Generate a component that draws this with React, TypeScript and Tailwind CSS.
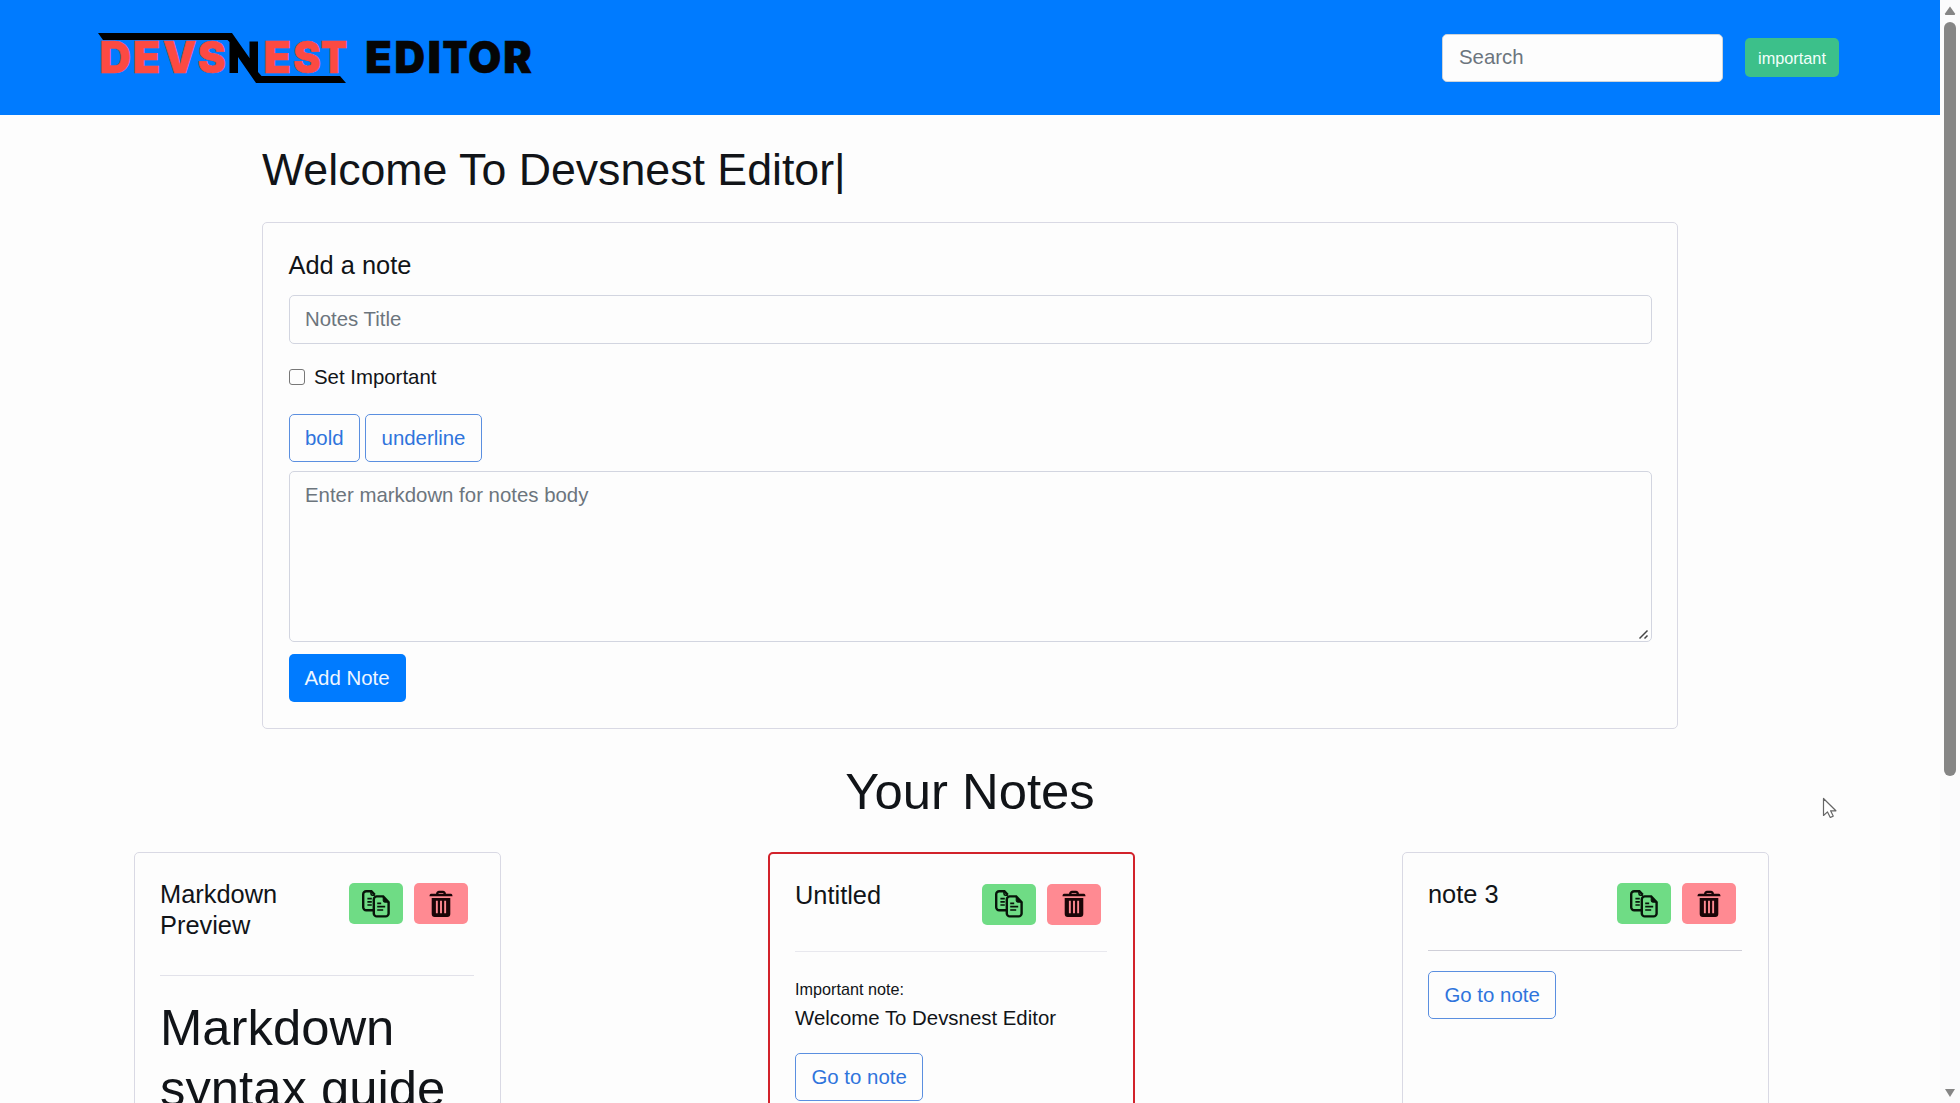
import React from "react";

const RED = "#fc4a42";
const BLACK = "#050505";

/* letter, left edge, advance width, colour */
const LETTERS: [string, number, number, string][] = [
  ["D", 99.6, 31.5, RED],
  ["E", 132.7, 27.5, RED],
  ["V", 163, 33.5, RED],
  ["S", 197.8, 28, RED],
  ["E", 263.4, 27.5, RED],
  ["S", 293.2, 27.5, RED],
  ["T", 320.8, 26.5, RED],
  ["E", 365.2, 26.5, BLACK],
  ["D", 394.4, 30.5, BLACK],
  ["I", 427.6, 13.5, BLACK],
  ["T", 442.5, 25, BLACK],
  ["O", 468.2, 33, BLACK],
  ["R", 503.2, 28.5, BLACK],
];

function Logo() {
  return (
    <svg
      className="ml-[97px] block"
      width="440"
      height="60"
      viewBox="97 28 440 60"
      aria-label="Devsnest Editor"
    >
      <g fontFamily="Inter, sans-serif" fontWeight="900" fontSize="43.5">
        {LETTERS.map(([char, x, width, color]) => (
          <text
            key={x}
            x={x}
            y="73"
            textLength={width}
            lengthAdjust="spacingAndGlyphs"
            fill={color}
            stroke={color}
            strokeWidth="0.6"
          >
            {char}
          </text>
        ))}
      </g>
      <polygon
        fill="#000"
        points="98,33 232,33 249.5,58 249.5,41.5 258,41.5 258,72 261.5,76 340,76 346,83 256,83 238,57 238,73 229.5,73 229.5,42 227.5,40 103,40"
      />
    </svg>
  );
}

function CopyIcon() {
  return (
    <svg width="28" height="28" viewBox="0 0 28 28" fill="none" stroke="#08150a" strokeWidth="2.4">
      <path d="M11.2 20.2H4.2a3 3 0 0 1-3-3V4.2a3 3 0 0 1 3-3h5.2l3.4 3.6" />
      <path d="M9 1.2v2.6a1.5 1.5 0 0 0 1.5 1.5h2.4" strokeWidth="1.6" />
      <path d="M5.4 8.6h4.4M5.4 11.8h4.4M5.4 15h4.4" strokeWidth="1.7" />
      <path d="M14.8 6.4h6.4l5.4 5.8v11.2a3 3 0 0 1-3 3h-8.8a3 3 0 0 1-3-3V9.4a3 3 0 0 1 3-3z" />
      <path d="M21.2 6.4l5.4 5.8h-3.9a1.5 1.5 0 0 1-1.5-1.5z" fill="#08150a" strokeWidth="1" />
      <path d="M15.2 13.4h4M15.2 16.6h8M15.2 20h6" strokeWidth="1.7" />
    </svg>
  );
}

function TrashIcon() {
  return (
    <svg width="24" height="28" viewBox="0 0 24 28" fill="#1a0507">
      <path d="M7 4.6C7 2 8.4.8 10 .8h4c1.600 0 3 1.200 3 3.800h-2.300c0-1-.4-1.500-1.200-1.500h-3c-.8 0-1.200.5-1.200 1.500z" />
      <path d="M2 3.700h20c.9 0 1.500.9 1.500 2.600H.5c0-1.700.6-2.600 1.500-2.600z" />
      <path
        fillRule="evenodd"
        d="M2.700 8h18.600v16a3 3 0 0 1-3 3H5.700a3 3 0 0 1-3-3zM6.900 10.800v12.400h1.900V10.800zM11.050 10.800v12.400h1.900V10.800zM15.200 10.800v12.400h1.900V10.800z"
      />
    </svg>
  );
}

function OutlineButton({ children }: { children: React.ReactNode }) {
  return (
    <button className="h-[48px] rounded-[5px] border border-[#5b8fe0] px-[15.5px] text-[20.4px] leading-[30px] text-[#2f74dc]">
      {children}
    </button>
  );
}

function NoteCard({
  title,
  important,
  children,
}: {
  title: string;
  important?: boolean;
  children: React.ReactNode;
}) {
  return (
    <article
      className={
        important
          ? "h-[400px] w-[367px] rounded-[5px] border-2 border-[#d2222b] px-[25.5px] pt-[25.5px]"
          : "h-[400px] w-[367px] rounded-[5px] border border-[#d9d9e4] px-[25.5px] pt-[26px]"
      }
    >
      <div className="flex items-start">
        <h5 className={important ? "w-[187px] text-[25.4px] leading-[31px]" : "w-[189px] text-[25.4px] leading-[31px]"}>
          {title}
        </h5>
        <div className="mt-[4px] flex gap-[11px]">
          <button className="flex h-[41px] w-[54px] items-center justify-center rounded-[5px] bg-[#6fdc85]">
            <CopyIcon />
          </button>
          <button className="flex h-[41px] w-[54px] items-center justify-center rounded-[5px] bg-[#ff8a92]">
            <TrashIcon />
          </button>
        </div>
      </div>
      {children}
    </article>
  );
}

export default function App() {
  return (
    <div className="flex h-[1103px] w-[1960px] overflow-hidden bg-[#fdfdfd] font-['Liberation_Sans',Arial,sans-serif] text-[#111418]">
      <main className="relative h-full w-[1940px] overflow-hidden">
        <header className="flex h-[115px] items-center bg-[#007bff]">
          <Logo />
          <input
            placeholder="Search"
            className="ml-[905px] h-[48px] w-[281px] rounded-[5px] border border-[#ced4da] bg-[#fdfdfd] px-[16px] text-[20.4px] placeholder:text-[#6c757d]"
          />
          <button className="ml-[22px] h-[39px] w-[94px] rounded-[5px] bg-[#3cc08a] pt-[1px] text-[16.3px] text-[#f2fffa]">
            important
          </button>
        </header>

        <section className="mx-[262px]">
          <h1 className="flex h-[107px] pt-[27px] text-[44.7px] leading-[56px] whitespace-nowrap">
            Welcome To Devsnest Editor|
          </h1>
          <div className="h-[507px] rounded-[5px] border border-[#d9d9e4] px-[25.5px] pt-[27px]">
            <h5 className="text-[25.4px] leading-[30px]">Add a note</h5>
            <input
              placeholder="Notes Title"
              className="mt-[15px] block h-[49px] w-full rounded-[5px] border border-[#d2d5e0] px-[15.5px] text-[20.4px] placeholder:text-[#6c757d]"
            />
            <label className="mt-[18px] flex h-[30px] items-center gap-[9.5px] text-[20.4px]">
              <span className="size-[16px] rounded-[3px] border border-[#777]" />
              Set Important
            </label>
            <div className="mt-[22px] flex gap-[5px]">
              <OutlineButton>bold</OutlineButton>
              <OutlineButton>underline</OutlineButton>
            </div>
            <div className="relative mt-[8.5px] h-[171px]">
              <textarea
                placeholder="Enter markdown for notes body"
                className="block h-full w-full resize-none rounded-[5px] border border-[#d2d5e0] px-[15.5px] pt-[8px] text-[20.4px] leading-[30.3px] placeholder:text-[#6c757d]"
              />
              <svg className="absolute right-[2px] bottom-[2px]" width="12" height="12" stroke="#444" strokeWidth="1.5">
                <path d="M1.5 10.5L9.5 2.5M6.5 10.5L9.5 7.5" />
              </svg>
            </div>
            <button className="mt-[12.5px] h-[48px] w-[117px] rounded-[5px] bg-[#007bff] text-[20.4px] text-[#eef6ff]">
              Add Note
            </button>
          </div>
        </section>

        <h1 className="h-[123px] pt-[33px] text-center text-[50.8px] leading-[60.6px]">Your Notes</h1>

        <div className="flex gap-[267px] pl-[133.5px]">
          <NoteCard title="Markdown Preview">
            <hr className="mt-[34px] border-[#e2e2ea]" />
            <h1 className="pt-[21px] text-[50.8px] leading-[61px] whitespace-nowrap">
              Markdown
              <br />
              syntax guide
            </h1>
          </NoteCard>
          <NoteCard title="Untitled" important>
            <hr className="mt-[26px] border-[#e8e8ee]" />
            <p className="pt-[25px] text-[16.2px] leading-[24px]">Important note:</p>
            <p className="pt-[2px] text-[20.4px] leading-[30.3px] whitespace-nowrap">Welcome To Devsnest Editor</p>
            <div className="mt-[20.5px]">
              <OutlineButton>Go to note</OutlineButton>
            </div>
          </NoteCard>
          <NoteCard title="note 3">
            <hr className="mt-[25.5px] border-[#cfcfd8]" />
            <div className="mt-[20px]">
              <OutlineButton>Go to note</OutlineButton>
            </div>
          </NoteCard>
        </div>

        <svg
          className="absolute top-[797px] left-[1822px]"
          width="18"
          height="24"
          fill="#fff"
          stroke="#666"
          strokeWidth="1.2"
          strokeLinejoin="round"
        >
          <path d="M1.5 1.5v17l4-3.6 2.8 5.6 2.9-1.4-2.6-5.3h5.3z" />
        </svg>
      </main>

      <aside className="flex w-[20px] flex-col items-center bg-[#fbfbfc]">
        <svg width="12" height="22" fill="#858585">
          <path d="M6 6.5L11 13.5q.5 1.5-1 1.5H2q-1.5 0-1-1.5z" />
        </svg>
        <div className="h-[754px] w-[12px] rounded-full bg-[#858585]" />
        <svg className="mt-auto" width="12" height="16" fill="#858585">
          <path d="M1 2h10L6 10z" />
        </svg>
      </aside>
    </div>
  );
}
